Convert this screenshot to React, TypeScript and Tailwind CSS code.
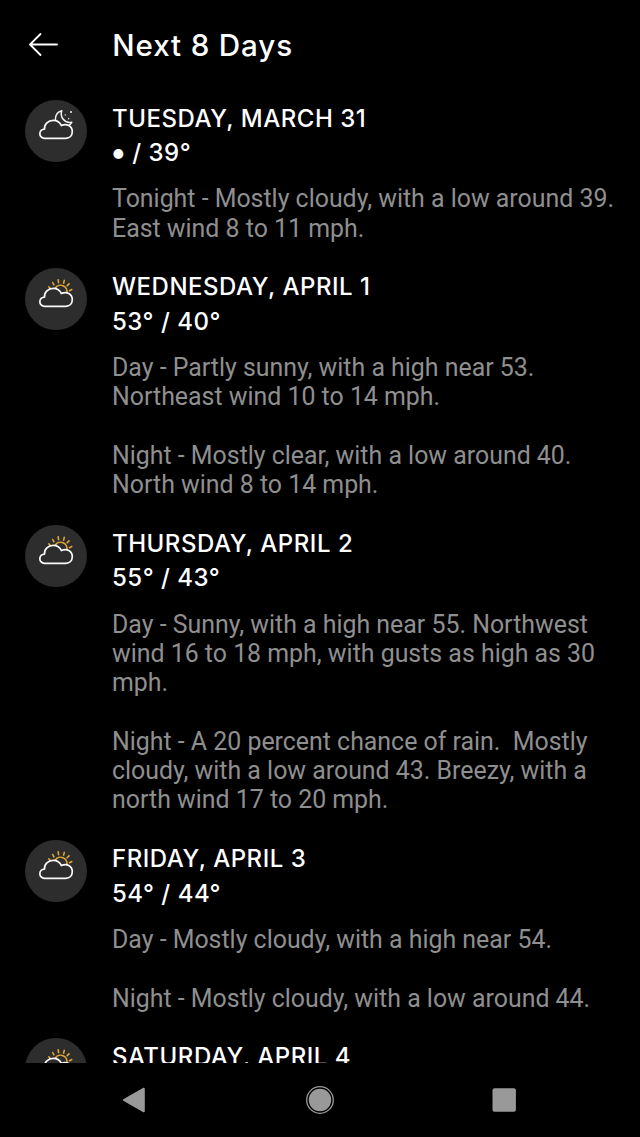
import React from 'react';

interface Forecast {
  day: string;
  high: string;
  low: string;
  details: string;
  icon: 'moon' | 'sun';
}

const forecasts: Forecast[] = [
  {
    day: 'TUESDAY, MARCH 31',
    high: '•',
    low: '39°',
    details: 'Tonight - Mostly cloudy, with a low around 39. East wind 8 to 11 mph.',
    icon: 'moon',
  },
  {
    day: 'WEDNESDAY, APRIL 1',
    high: '53°',
    low: '40°',
    details:
      'Day - Partly sunny, with a high near 53. Northeast wind 10 to 14 mph.\n\nNight - Mostly clear, with a low around 40. North wind 8 to 14 mph.',
    icon: 'sun',
  },
  {
    day: 'THURSDAY, APRIL 2',
    high: '55°',
    low: '43°',
    details:
      'Day - Sunny, with a high near 55. Northwest wind 16 to 18 mph, with gusts as high as 30 mph.\n\nNight - A 20 percent chance of rain.  Mostly cloudy, with a low around 43. Breezy, with a north wind 17 to 20 mph.',
    icon: 'sun',
  },
  {
    day: 'FRIDAY, APRIL 3',
    high: '54°',
    low: '44°',
    details: 'Day - Mostly cloudy, with a high near 54.\n\nNight - Mostly cloudy, with a low around 44.',
    icon: 'sun',
  },
  {
    day: 'SATURDAY, APRIL 4',
    high: '',
    low: '',
    details: '',
    icon: 'sun',
  },
];

const WeatherIcon: React.FC<{ type: Forecast['icon'] }> = ({ type }) => (
  <svg viewBox="0 0 62 62" className="w-[62px] h-[62px] shrink-0" fill="none" strokeLinecap="round" strokeLinejoin="round">
    <circle cx="31" cy="31" r="31" fill="#2d2d2d" />
    {type === 'sun' ? (
      <g stroke="#e0a63a" strokeWidth="1.6">
        <path d="M30.2 20.1A6.4 6.4 0 0 1 41.8 25" />
        <path d="M23.8 18.8l1.4 1.6M27.7 14.5l1.2 2.3M33.2 11.9l.4 2.7M39.3 12.4l-.7 2.7M44 15.9l-1.9 1.9M46.8 21.5l-2.3 1.2" />
      </g>
    ) : (
      <g stroke="#f2f2f2" strokeWidth="1.5">
        <path d="M30.4 19.8C30.4 15 33 11.6 36.8 10.8C34.6 16.6 39.4 23.8 46.8 22.2C46.2 23.6 45.3 24.5 44.2 25.2" />
        <g fill="#f2f2f2" stroke="none">
          <circle cx="46" cy="12" r="1" />
          <circle cx="40.2" cy="14.9" r=".7" />
          <circle cx="43.7" cy="18.8" r=".7" />
        </g>
      </g>
    )}
    <path
      d="M19.4 38.3A4.6 4.6 0 0 1 19.5 29.1C19.2 24 23.2 20.4 28.3 20.4C32.3 20.4 34.9 22.3 36.3 25.5C41.6 23 47.3 26 47.3 31.6C47.3 35.6 44.6 38.3 40.8 38.3Z"
      fill="#2d2d2d"
      stroke="#fafafa"
      strokeWidth="1.7"
    />
  </svg>
);

const ForecastRow: React.FC<{ item: Forecast }> = ({ item }) => (
  <li className="flex gap-[25px] pl-[25px] pr-5 pb-[25.4px]">
    <WeatherIcon type={item.icon} />
    <div className="flex-1 pt-[2.1px]">
      <h2 className="font-['Inter',sans-serif] font-medium text-[24px] leading-[34.3px] tracking-[0.52px] text-white">{item.day}</h2>
      <p className="h-[34.3px] font-['Inter',sans-serif] font-medium text-[24px] leading-[34.3px] tracking-[0.5px] text-white">
        {item.high && (
          <>
            <span className={item.high === '•' ? 'inline-block scale-130' : ''}>{item.high}</span> / {item.low}
          </>
        )}
      </p>
      <p className="mt-[14.1px] font-['Roboto',sans-serif] text-[24.9px] leading-[29.3px] text-[#8f8f8f] whitespace-pre-wrap">{item.details}</p>
    </div>
  </li>
);

export default function App() {
  return (
    <div className="flex flex-col w-[640px] h-[1137px] bg-black overflow-hidden">
      <header className="flex items-center h-[90px] shrink-0 pl-[25px]">
        <svg viewBox="0 0 38 38" className="w-[38px] h-[38px]" fill="none" stroke="#fff" strokeWidth="1.8" strokeLinecap="round" strokeLinejoin="round">
          <path d="M32 18.5H5M15.5 8L5 18.5L15.5 29" />
        </svg>
        <h1 className="ml-[49.3px] pb-px font-['Inter',sans-serif] font-medium text-[29.6px] leading-[40px] tracking-[0.85px] text-white">Next 8 Days</h1>
      </header>

      <ul className="flex-1 min-h-0 overflow-hidden pt-[9.5px]">
        {forecasts.map((item) => (
          <ForecastRow key={item.day} item={item} />
        ))}
      </ul>

      <nav className="flex items-center justify-between h-[74.5px] shrink-0 pl-[120px] pr-[122px]">
        <svg viewBox="0 0 28 28" className="w-7 h-7" fill="#999" stroke="#999" strokeWidth="2" strokeLinejoin="round">
          <path d="M3.8 14L23.8 2.7V25.3Z" />
        </svg>
        <svg viewBox="0 0 28 28" className="w-7 h-7 ml-0.5" fill="none">
          <circle cx="14" cy="14" r="13.3" stroke="#999" strokeWidth="1.3" />
          <circle cx="14" cy="14" r="11.2" fill="#999" />
        </svg>
        <svg viewBox="0 0 28 28" className="w-7 h-7" fill="#999">
          <rect x="2.5" y="2.3" width="23.4" height="23.4" rx="2" />
        </svg>
      </nav>
    </div>
  );
}
